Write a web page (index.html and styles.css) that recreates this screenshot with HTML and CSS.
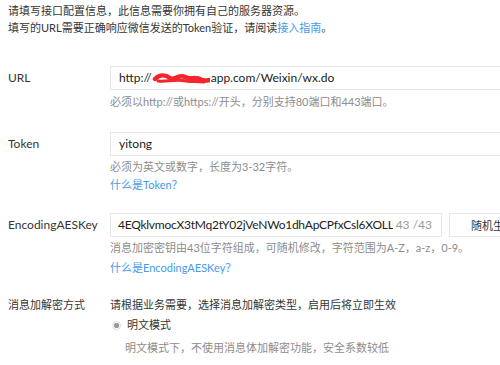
FILE: index.html
```html
<!DOCTYPE html>
<html lang="zh-CN">
<head>
<meta charset="utf-8">
<title>服务器配置</title>
<link rel="stylesheet" href="styles.css">
</head>
<body>
<div class="page">
  <div class="intro">
    <p>请填写接口配置信息，此信息需要你拥有自己的服务器资源。</p>
    <p>填写的URL需要正确响应微信发送的Token验证，请阅读<a class="link" href="#">接入指南</a>。</p>
  </div>

  <div class="row row-url">
    <div class="label">URL</div>
    <div class="field">
      <div class="input input-wide">http://<span class="scribble"><svg width="58" height="16" viewBox="0 0 58 16"><path d="M3 9 C 8 4, 14 5, 18 8 C 22 11, 27 4, 33 7 C 38 10, 44 6, 50 10 C 53 11, 56 10, 58 10" fill="none" stroke="#f2262b" stroke-width="4.5" stroke-linecap="round"/><path d="M6 11 C 14 12, 24 9, 34 11 C 40 12, 46 11, 52 12" fill="none" stroke="#f2262b" stroke-width="3" stroke-linecap="round"/></svg></span>app.com/Weixin/wx.do</div>
      <p class="hint hint-url">必须以http://或https://开头，分别支持80端口和443端口。</p>
    </div>
  </div>

  <div class="row row-token">
    <div class="label">Token</div>
    <div class="field">
      <div class="input input-wide">yitong</div>
      <p class="hint hint-token">必须为英文或数字，长度为3-32字符。</p>
      <p class="more more-token"><a class="link" href="#">什么是Token？</a></p>
    </div>
  </div>

  <div class="row row-aes">
    <div class="label">EncodingAESKey</div>
    <div class="field">
      <div class="aes-line">
        <div class="input input-aes"><span class="aes-value">4EQklvmocX3tMq2tY02jVeNWo1dhApCPfxCsl6XOLL</span><span class="counter">43 /43</span></div>
        <button class="btn" type="button">随机生成</button>
      </div>
      <p class="hint hint-aes">消息加密密钥由43位字符组成，可随机修改，字符范围为A-Z，a-z，0-9。</p>
      <p class="more more-aes"><a class="link" href="#">什么是EncodingAESKey？</a></p>
    </div>
  </div>

  <div class="row row-mode">
    <div class="label label-text">消息加解密方式</div>
    <div class="field">
      <p class="mode-desc">请根据业务需要，选择消息加解密类型，启用后将立即生效</p>
      <div class="radio-line"><span class="radio"></span><span class="radio-text">明文模式</span></div>
      <p class="hint radio-hint">明文模式下，不使用消息体加解密功能，安全系数较低</p>
    </div>
  </div>
</div>
</body>
</html>
```

FILE: styles.css
```css
html, body {
  margin: 0;
  padding: 0;
  background: #ffffff;
}

body {
  width: 500px;
  height: 365px;
  overflow: hidden;
  font-family: "Lato", "Noto Sans CJK SC", sans-serif;
  color: #353535;
}

p {
  margin: 0;
}

.page {
  padding: 2px 0 0 8px;
}

.intro {
  font-size: 11px;
  line-height: 17px;
  color: #353535;
}

.link {
  color: #459ae9;
  text-decoration: none;
}

.row {
  display: grid;
  grid-template-columns: 102px 1fr;
}

.row-url { margin-top: 30px; }
.row-token { margin-top: 22px; }
.row-aes { margin-top: 20px; }
.row-mode { margin-top: 21px; }

.label {
  font-size: 12px;
  line-height: 24px;
  color: #353535;
  white-space: nowrap;
}

.label-text {
  font-size: 11px;
  line-height: 16px;
}

.field {
  min-width: 0;
}

.input {
  box-sizing: border-box;
  height: 24px;
  border: 1px solid #e7e7eb;
  padding: 0 7px;
  font-size: 12px;
  line-height: 22px;
  color: #222222;
  white-space: nowrap;
  overflow: hidden;
  display: flex;
  align-items: center;
}

.input-wide {
  width: 420px;
  padding-left: 8px;
}

.scribble {
  display: inline-flex;
  width: 58px;
  height: 16px;
  margin-right: 1px;
}

.aes-line {
  display: flex;
  gap: 7px;
}

.input-aes {
  width: 332px;
  flex: none;
  padding-right: 9px;
  letter-spacing: -0.25px;
}

.aes-value {
  overflow: hidden;
  flex: 1 1 auto;
  min-width: 0;
}

.counter {
  color: #9a9a9a;
  margin-left: 3px;
  flex: none;
  letter-spacing: 0;
}

.btn {
  flex: none;
  box-sizing: border-box;
  width: 90px;
  height: 24px;
  border: 1px solid #e7e7eb;
  background: #ffffff;
  font-family: inherit;
  font-size: 11px;
  color: #353535;
  text-align: left;
  padding: 0 0 0 21px;
}

.hint {
  font-size: 11px;
  line-height: 16px;
  color: #8d8d8d;
  white-space: nowrap;
}

.hint-url { margin-top: 4px; }
.hint-token { margin-top: 3px; }
.hint-aes { margin-top: 3px; }

.more {
  font-size: 11px;
  line-height: 16px;
}

.more-token { margin-top: 2px; }
.more-aes { margin-top: 4px; }

.mode-desc {
  font-size: 11px;
  line-height: 16px;
  color: #353535;
}

.radio-line {
  margin-top: 4px;
  display: flex;
  align-items: center;
  font-size: 11px;
  line-height: 16px;
  color: #353535;
}

.radio {
  box-sizing: border-box;
  width: 9px;
  height: 9px;
  border-radius: 50%;
  border: 1px solid #dcdcdc;
  background: radial-gradient(circle, #9b9b9b 0 2.5px, #ffffff 3px);
  margin: 0 6px 0 2px;
}

.radio-hint {
  margin-top: 7px;
  padding-left: 15px;
}
```
